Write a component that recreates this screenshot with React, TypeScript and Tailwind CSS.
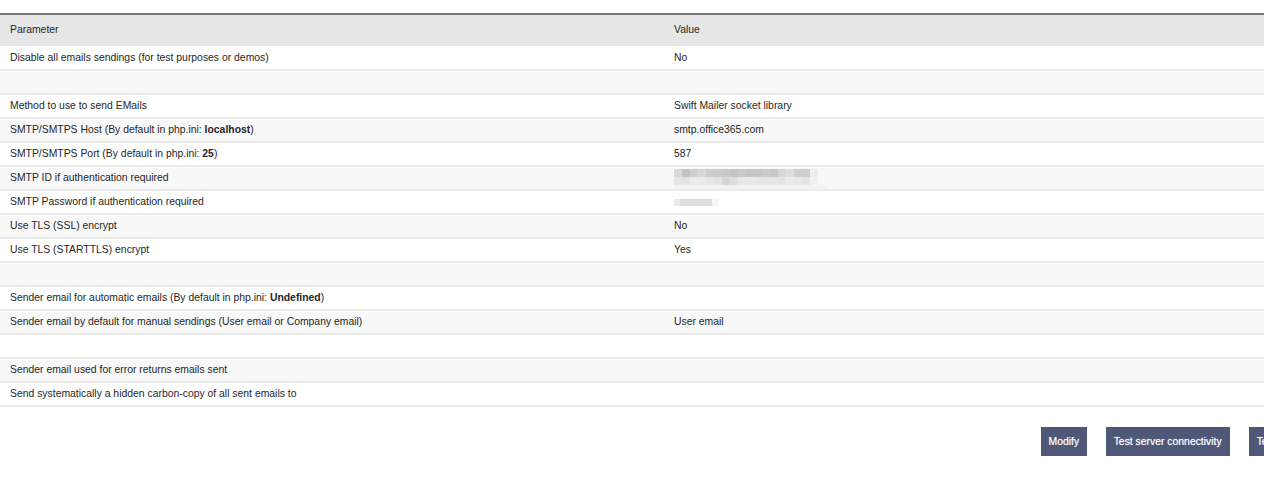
import React from "react";

type Row = { label: React.ReactNode; value?: React.ReactNode };

const blurShades = [
  ["#dcd8d8", "#c4c4c4", "#cdd0d0", "#d6d8d6", "#cfcbcb", "#cbcccb", "#c8cbca", "#c6c3c3", "#c9c9c9", "#cac5c4", "#c8c6c6", "#cbcbcb", "#c8c8c8", "#d6d6d6", "#dcdfdd", "#d0cfcf", "#cfcfcf", "#ecedf0"],
  ["#e6e6e6", "#e3e3e3", "#ebebeb", "#e9e9e9", "#e6e6e6", "#e3e3e3", "#d5d5d5", "#dedede", "#e8e8e8", "#e8e8e8", "#e6e6e6", "#e4e4e4", "#e6e6e6", "#e4e4e4", "#ebebeb", "#e8e8e8", "#e3e3e3", "#f0f0f0"],
];

function BlurredId() {
  return (
    <div className="flex flex-col pt-[1px]">
      {blurShades.map((line, i) => (
        <div key={i} className="flex">
          {line.map((c, j) => (
            <div key={j} className="h-[8px] w-[8px]" style={{ background: c }} />
          ))}
        </div>
      ))}
      <div className="h-[4px] w-[154px] bg-[#f3f3f3]" />
    </div>
  );
}

function BlurredPassword() {
  return (
    <div className="flex">
      <div className="h-[7px] w-[6px] bg-[#ebebeb]" />
      <div className="h-[7px] w-[32px] bg-[#dedede]" />
      <div className="h-[7px] w-[6px] bg-[#f5f5f5]" />
    </div>
  );
}

const rows: Row[] = [
  { label: "Disable all emails sendings (for test purposes or demos)", value: "No" },
  { label: "" },
  { label: "Method to use to send EMails", value: "Swift Mailer socket library" },
  {
    label: (
      <>
        SMTP/SMTPS Host (By default in php.ini: <b>localhost</b>)
      </>
    ),
    value: "smtp.office365.com",
  },
  {
    label: (
      <>
        SMTP/SMTPS Port (By default in php.ini: <b>25</b>)
      </>
    ),
    value: "587",
  },
  { label: "SMTP ID if authentication required", value: <BlurredId /> },
  { label: "SMTP Password if authentication required", value: <BlurredPassword /> },
  { label: "Use TLS (SSL) encrypt", value: "No" },
  { label: "Use TLS (STARTTLS) encrypt", value: "Yes" },
  { label: "" },
  {
    label: (
      <>
        Sender email for automatic emails (By default in php.ini: <b>Undefined</b>)
      </>
    ),
  },
  { label: "Sender email by default for manual sendings (User email or Company email)", value: "User email" },
  { label: "" },
  { label: "Sender email used for error returns emails sent" },
  { label: "Send systematically a hidden carbon-copy of all sent emails to" },
];

const btn =
  "h-[29px] shrink-0 bg-[#4f5877] text-white [text-shadow:0_0_1px_rgba(255,255,255,0.6)]";

export default function App() {
  return (
    <div
      className="h-[498px] w-[1264px] overflow-hidden bg-white text-[10.4px] text-[#262626]"
      style={{ fontFamily: '"Liberation Sans", Arial, sans-serif' }}
    >
      <div className="w-[1329px] pt-[13px]">
        <table className="w-full border-collapse">
          <thead>
            <tr className="h-[32px] border-t-2 border-[#777777] bg-[#e6e6e6] text-left">
              <th className="w-[664px] pb-[2px] pl-[10px] font-normal">Parameter</th>
              <th className="pb-[2px] pl-[10px] font-normal">Value</th>
            </tr>
          </thead>
          <tbody>
            {rows.map((r, i) => (
              <tr
                key={i}
                className={`h-[24px] border-b-2 border-[#ebebeb] ${i % 2 === 0 ? "bg-white" : "bg-[#f8f8f8]"}`}
              >
                <td className="pl-[10px] align-middle">{r.label}</td>
                <td className="pl-[10px] align-middle">{r.value}</td>
              </tr>
            ))}
          </tbody>
        </table>

        <div className="flex justify-end gap-[19px] pr-[6px] pt-[20px]">
          <button className={`${btn} px-[7.5px]`}>Modify</button>
          <button className={`${btn} px-[8px]`}>Test server connectivity</button>
          <button className={`${btn} px-[8px]`}>Test sending</button>
        </div>
      </div>
    </div>
  );
}
